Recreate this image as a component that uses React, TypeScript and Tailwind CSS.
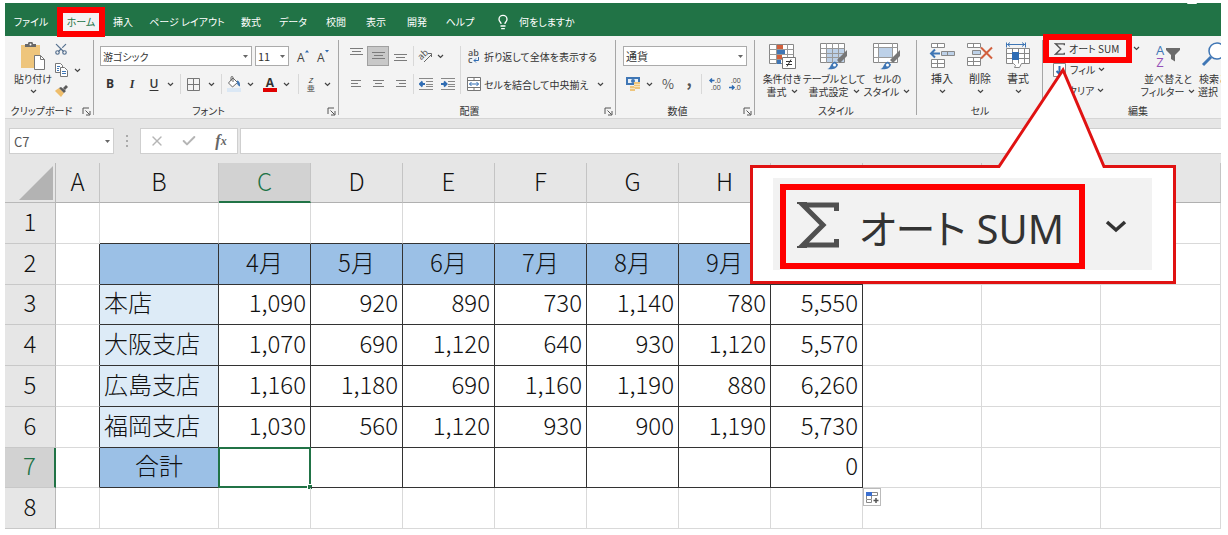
import type { ReactNode } from "react";
import { Lightbulb, X, Check, Scissors } from "lucide-react";

const COLUMNS = ["A", "B", "C", "D", "E", "F", "G", "H", "I", "J", "K", "L"];

const SHEET: Record<number, string[]> = {
  2: ["", "", "4月", "5月", "6月", "7月", "8月", "9月", "合計"],
  3: ["", "本店", "1,090", "920", "890", "730", "1,140", "780", "5,550"],
  4: ["", "大阪支店", "1,070", "690", "1,120", "640", "930", "1,120", "5,570"],
  5: ["", "広島支店", "1,160", "1,180", "690", "1,160", "1,190", "880", "6,260"],
  6: ["", "福岡支店", "1,030", "560", "1,120", "930", "900", "1,190", "5,730"],
  7: ["", "合計", "", "", "", "", "", "", "0"],
};

const TABS = [
  { name: "挿入", width: "w-9" },
  { name: "ページ レイアウト", width: "w-[92px]" },
  { name: "数式", width: "w-9" },
  { name: "データ", width: "w-12" },
  { name: "校閲", width: "w-[38px]" },
  { name: "表示", width: "w-[42px]" },
  { name: "開発", width: "w-10" },
  { name: "ヘルプ", width: "w-[46px]" },
];

function Chevron() {
  return (
    <svg width="7" height="5" viewBox="0 0 7 5" fill="none" stroke="#444" strokeWidth="1.2">
      <path d="M1 1l2.500 2.500L6 1" />
    </svg>
  );
}

function Caret() {
  return (
    <svg width="5" height="3" viewBox="0 0 5 3" className="pointer-events-none absolute right-1 top-1/2 -mt-px">
      <path d="M0 0h5L2.500 3z" fill="#666" />
    </svg>
  );
}

function SigmaIcon({ className }: { className: string }) {
  return (
    <svg viewBox="0 0 42 46" className={`shrink-0 ${className}`} fill="none" stroke="#505050">
      <path d="M39.500 9V3H6l20 20L6 43h33.500v-6" strokeWidth="5" />
      <path d="M0 1h10M0 45h10" strokeWidth="2" />
    </svg>
  );
}

function Tool({ label, className, children }: { label: string; className: string; children: ReactNode }) {
  return (
    <button aria-label={label} className={`flex h-5 shrink-0 items-center justify-center ${className}`}>
      {children}
    </button>
  );
}

function Drop({ className = "w-3" }: { className?: string }) {
  return (
    <Tool label="その他" className={className}>
      <Chevron />
    </Tool>
  );
}

function Divider({ className = "" }: { className?: string }) {
  return <span className={`h-5 w-px shrink-0 bg-[#d8d8d8] ${className}`} />;
}

function Group({
  name,
  className,
  launcher = false,
  children,
}: {
  name: string;
  className: string;
  launcher?: boolean;
  children: ReactNode;
}) {
  return (
    <section aria-label={name} className={`relative flex shrink-0 flex-col ${className}`}>
      <div className="h-[67px]">{children}</div>
      <div className={`relative flex h-4 items-center justify-center ${launcher ? "pr-4" : ""}`}>
        {name}
        {launcher && (
          <button aria-label={`${name}の設定`} className="absolute bottom-0.5 right-[3px]">
            <svg width="9" height="9" viewBox="0 0 9 9" fill="none" stroke="#555">
              <path d="M1 7V1h6M3.500 3.500l4 4M8 4v4H4" />
            </svg>
          </button>
        )}
      </div>
      <span className="absolute bottom-[3px] right-0 top-1 w-px bg-[#a6a6a6]" />
    </section>
  );
}

/* Tall button: icon on top, two lines below */
function BigTool({
  icon,
  line1,
  line2,
  className,
}: {
  icon: ReactNode;
  line1: string;
  line2?: string;
  className: string;
}) {
  return (
    <button
      className={`flex shrink-0 flex-col items-center whitespace-nowrap pt-1.5 leading-[13px] ${className}`}
    >
      <span className="flex h-[30px] items-start justify-center">{icon}</span>
      <span>{line1}</span>
      <span className="flex h-[13px] items-center gap-1">
        {line2}
        <Chevron />
      </span>
    </button>
  );
}

function PasteIcon() {
  return (
    <svg width="26" height="28" viewBox="0 0 26 28">
      <path d="M1 3h19v23H1z" fill="#eec57c" />
      <path d="M5 5V2h3a2.500 2.500 0 0 1 5 0h3v3z" fill="#686868" />
      <circle cx="10.500" cy="2.500" r="1" fill="#fff" />
      <path d="M14.500 13.500h6l4 4v10h-10z" fill="#fff" stroke="#777" />
      <path d="M20.500 13.500v4h4" fill="none" stroke="#777" />
    </svg>
  );
}

function CopyIcon() {
  return (
    <svg width="13" height="14" viewBox="0 0 13 14" fill="#fff" stroke="#777">
      <path d="M.5 .5h5l2 2v7h-7z" />
      <path d="M5.500 4.500h4l3 3v6h-7z" />
      <path d="M2 3.500h3M2 5.500h2M2 7.500h2M7 8.500h4M7 10.500h4" stroke="#3f76b5" />
    </svg>
  );
}

function PainterIcon() {
  return (
    <svg width="13" height="12" viewBox="0 0 13 12">
      <path d="M1 5l3-2 5 5-3 4-6-6z" fill="#eebd6b" />
      <path d="M4 3l2-1 5 4-2 2zM8 3l3-3 2 2-3 3z" fill="#5b5b5b" />
    </svg>
  );
}

function BordersIcon() {
  return (
    <svg width="13" height="13" viewBox="0 0 13 13" fill="none" stroke="#777">
      <path d="M.5 .5h12v12H.5zM6.500 .5v12M.5 6.500h12" />
    </svg>
  );
}

function BucketIcon() {
  return (
    <svg width="14" height="16" viewBox="0 0 14 16" fill="none" stroke="#666">
      <path d="M5 3L1.500 7l4 4 5-4.500L6 2z" fill="#fff" />
      <path d="M4 5V1.500a1 1 0 0 1 2 0V6" />
      <path d="M10 5c2 0 2.500 2 2.500 5-1.500-1-2-2-2-4z" fill="#3f76b5" stroke="#3f76b5" />
      <path d="M0 12h14v4H0z" fill="#dbe8f5" stroke="none" />
    </svg>
  );
}

function FontSizeIcon({ grow }: { grow?: boolean }) {
  return (
    <svg width="14" height="16" viewBox="0 0 14 16" fontFamily="Open Sans" fontSize="12" fill="#444">
      <text x="1" y="14">A</text>
      <path d={grow ? "M9 4.500L11 2l2 2.500z" : "M9 2l2 2.500L13 2z"} fill="#2f6cb3" />
    </svg>
  );
}

/* Text lines; widths in pixels, one for each line */
function Lines({ widths, align }: { widths: number[]; align: "left" | "center" | "right" }) {
  return (
    <svg width="13" height={widths.length * 3 - 1} stroke="#7b7b7b">
      {widths.map((w, i) => {
        const x = align === "left" ? 1 : align === "right" ? 12 - w : Math.floor((13 - w) / 2);
        return <path key={i} d={`M${x} ${i * 3 + 0.5}h${w}`} />;
      })}
    </svg>
  );
}

function IndentIcon({ increase }: { increase?: boolean }) {
  return (
    <svg width="14" height="12" viewBox="0 0 14 12" fill="none" stroke="#888">
      <path d="M0 .5h14M7 3.500h7M7 6.500h7M7 8.500h7M0 11.500h14" />
      <path
        d={increase ? "M0 6h5M3 3.500L5.500 6 3 8.500" : "M1 6h5M3.500 3.500L1 6l2.500 2.500"}
        stroke="#2f6cb3"
        strokeWidth="2"
      />
    </svg>
  );
}

function OrientationIcon() {
  return (
    <svg width="16" height="14" viewBox="0 0 16 14">
      <text x="1" y="10" fontSize="9" fill="#555" transform="rotate(-42 4 8)">
        ab
      </text>
      <path d="M6 13l7-7M10 4.500h3.500V8" fill="none" stroke="#666" />
    </svg>
  );
}

function WrapIcon() {
  return (
    <svg width="13" height="16" viewBox="0 0 13 16" fontFamily="Open Sans" fontWeight="600" fontSize="9" fill="#555">
      <text x="1" y="8">ab</text>
      <text x="1" y="15">c</text>
      <path d="M11.500 9v3.500H7M9 10.500l-2 2 2 2" fill="none" stroke="#2f6cb3" />
    </svg>
  );
}

function MergeIcon() {
  return (
    <svg width="14" height="14" viewBox="0 0 14 14" fill="#fff" stroke="#777">
      <path d="M.5 .5h13v13H.5zM.5 3.500h13M.5 10.500h13M7 .5v3M7 10.500v3" />
      <path d="M2.500 7h9M4.500 5L2.500 7l2 2M9.500 5l2 2-2 2" fill="none" stroke="#2f6cb3" />
    </svg>
  );
}

function CurrencyIcon() {
  return (
    <svg width="14" height="14" viewBox="0 0 14 14">
      <path d="M0 0h14v8H0z" fill="#3f76b5" />
      <path d="M2 2h10v4H2z" fill="#e8f0f8" />
      <circle cx="7" cy="4" r="2" fill="#3f76b5" />
      <path d="M8 5h6v7H8zM4 9h5v5H4z" fill="#eec57c" />
      <path d="M8 7.500h6M8 9.500h6M4 11.500h5" stroke="#f6e3bd" />
    </svg>
  );
}

function DecimalIcon({ increase }: { increase?: boolean }) {
  return (
    <svg width="14" height="16" viewBox="0 0 14 16" fontFamily="Open Sans" fontSize="7" fill="#444">
      <text x={increase ? 6 : 2} y="7">{increase ? ".0" : ".00"}</text>
      <text x={increase ? 2 : 6} y="14">{increase ? ".00" : ".0"}</text>
      <path
        d={increase ? "M5.500 4.500H1M3 2.500l-2 2 2 2" : "M0 11.500h5M3 9.500l2 2-2 2"}
        fill="none"
        stroke="#2f6cb3"
        strokeWidth="1.500"
      />
    </svg>
  );
}

function ConditionalIcon() {
  return (
    <svg width="27" height="28" viewBox="0 0 27 28">
      <path d="M.5 2.500h24v19H.5z" fill="#fff" stroke="#888" />
      <path d="M8 3h6v5H8zM8 13h5v5H8z" fill="#d2603d" />
      <path d="M8 8h8v5H8zM8 18h4v4H8z" fill="#3f76b5" />
      <path d="M.5 7.500h24M.5 12.500h24M.5 17.500h24M7.500 2v20M18.500 2v20" stroke="#999" fill="none" />
      <path d="M13.500 15.500h13v11h-13z" fill="#fff" stroke="#777" />
      <path d="M17 19.500h6M17 22.500h6M22 17.500l-4 7" fill="none" stroke="#333" />
    </svg>
  );
}

function TableStyleIcon({ cell }: { cell?: boolean }) {
  return (
    <svg width="28" height="28" viewBox="0 0 28 28">
      <path d="M.5 1.500h24v19H.5z" fill="#fff" stroke="#888" />
      {cell ? <path d="M6 6h13v9H6z" fill="#bdd1e8" /> : <path d="M7 6h17v14H7z" fill="#bdd1e8" />}
      {cell ? (
        <path d="M.5 5.500h24M.5 15.500h24M5.500 1v20M19.500 1v20" stroke="#999" fill="none" />
      ) : (
        <path d="M.5 6.500h24M.5 11.500h24M.5 15.500h24M6.500 1v20M12.500 1v20M18.500 1v20" stroke="#999" fill="none" />
      )}
      <path d="M27 8v6l-7 7-3-3z" fill="#777" />
      <path d="M7 27c4 0 3-6 8-7.500l3 3C17 27 12 28 7 27z" fill="#3f76b5" />
      <circle cx="14.500" cy="23" r="1.500" fill="#fff" />
    </svg>
  );
}

function InsertCellsIcon() {
  return (
    <svg width="26" height="27" viewBox="0 0 26 27" fill="#fff" stroke="#888">
      <path d="M2.500 1.500h13v4h-13zM8.500 1.500v4M2.500 17.500h13v8h-13zM8.500 17.500v8M2.500 21.500h13" />
      <path d="M12.500 9.500h13v4h-13zM18.500 9.500v4" fill="#bdd1e8" />
      <path d="M11 11.500H2M6 7.500l-4 4 4 4" fill="none" stroke="#3f76b5" strokeWidth="2" />
    </svg>
  );
}

function DeleteCellsIcon() {
  return (
    <svg width="26" height="27" viewBox="0 0 26 27" fill="#fff" stroke="#888">
      <path d="M.5 1.500h13v4H.5zM6.500 1.500v4M.5 15.500h13v8H.5zM6.500 15.500v8M.5 19.500h13" />
      <path d="M5.500 8.500h8v4h-8z" fill="#bdd1e8" />
      <path d="M14 5.500l11 11M25 5.500l-11 11" fill="none" stroke="#d2603d" strokeWidth="2" />
    </svg>
  );
}

function FormatCellsIcon() {
  return (
    <svg width="26" height="27" viewBox="0 0 26 27" fill="#fff" stroke="#888">
      <path d="M1.500 .5v5M20.500 .5v5M2 2.500h18M5 .5l-2.500 2L5 4.500M17 .5l2.500 2-2.500 2" fill="none" stroke="#3f76b5" />
      <path d="M1.500 6.500h23v15h-8l-2 4h-5l1-2-2-2h-7zM7.500 6.500v15M13.500 6.500v15M19.500 6.500v15M1.500 11.500h23M1.500 16.500h23" />
      <path d="M7 10h7v8H7z" fill="#2f6cb3" stroke="none" />
    </svg>
  );
}

function SortFilterIcon() {
  return (
    <span className="flex items-center gap-0.5 font-['Open_Sans',sans-serif] text-[13px] leading-[12px]">
      <span className="flex flex-col pt-0.5">
        <span className="text-[#3f76b5]">A</span>
        <span className="text-[#9450b8]">Z</span>
      </span>
      <svg width="14" height="14" viewBox="0 0 14 14">
        <path d="M0 0h14v2L9 7v6.500L5 11V7L0 2z" fill="#6b6b6b" />
      </svg>
    </span>
  );
}

function FindIcon() {
  return (
    <svg width="26" height="26" viewBox="0 0 26 26" fill="none" stroke="#3f76b5">
      <circle cx="16" cy="9" r="8" fill="#fff" strokeWidth="1.500" />
      <path d="M10 15L2 23" strokeWidth="3" />
    </svg>
  );
}

function Ribbon() {
  return (
    <div className="flex h-[83px] overflow-hidden border-b border-[#d5d5d5] bg-[#f3f3f3] text-[10px] text-[#333]">
      <Group name="クリップボード" className="w-[89px]" launcher>
        <div className="flex">
          <BigTool className="w-14" icon={<PasteIcon />} line1="貼り付け" />
          <div className="flex flex-col pt-[3px]">
            <div className="flex h-[21px]">
              <Tool label="切り取り" className="-ml-2.5 w-5">
                <Scissors size={14} strokeWidth={2} className="-rotate-90 text-[#55708f]" />
              </Tool>
            </div>
            <div className="flex h-[21px]">
              <Tool label="コピー" className="-ml-2.5 w-5">
                <CopyIcon />
              </Tool>
              <Drop />
            </div>
            <div className="flex h-[21px]">
              <Tool label="書式のコピー" className="-ml-2.5 w-5">
                <PainterIcon />
              </Tool>
            </div>
          </div>
        </div>
      </Group>

      <Group name="フォント" className="w-[245px]" launcher>
        <div className="flex flex-col gap-2 pl-1.5 pt-[10px]">
          <div className="flex">
            <span className="relative mr-[3px]">
              <select
                aria-label="フォント名"
                className="h-5 w-[152px] appearance-none border border-[#ababab] bg-white pl-0.5 text-[10px]"
              >
                <option>游ゴシック</option>
              </select>
              <Caret />
            </span>
            <span className="relative">
              <select
                aria-label="フォント サイズ"
                className="h-5 w-[34px] appearance-none border border-[#ababab] bg-white pl-0.5 text-[11px]"
              >
                <option>11</option>
              </select>
              <Caret />
            </span>
            <Tool label="拡大" className="ml-1 w-5">
              <FontSizeIcon grow />
            </Tool>
            <Tool label="縮小" className="w-5">
              <FontSizeIcon />
            </Tool>
          </div>
          <div className="flex font-['Open_Sans',sans-serif] text-[12px]">
            <Tool label="太字" className="w-5 font-bold">B</Tool>
            <Tool label="斜体" className="w-6 font-['Liberation_Serif',serif] font-bold italic">I</Tool>
            <Tool label="下線" className="w-5 font-semibold underline underline-offset-2">U</Tool>
            <Drop />
            <Divider className="ml-1" />
            <Tool label="罫線" className="ml-1 w-4">
              <BordersIcon />
            </Tool>
            <Drop className="ml-1 w-3" />
            <Divider className="ml-1" />
            <Tool label="塗りつぶしの色" className="ml-1 w-4">
              <BucketIcon />
            </Tool>
            <Drop className="w-4" />
            <Tool label="フォントの色" className="ml-1 w-4">
              <span className="w-[14px] border-b-4 border-[#e00000] text-center font-bold leading-[11px]">A</span>
            </Tool>
            <Drop className="w-4" />
            <Divider className="ml-1" />
            <Tool label="ふりがな" className="ml-1 w-4">
              <span className="flex flex-col items-center text-[8px] leading-[8px]">
                <i>Z</i>
                <span>亜</span>
              </span>
            </Tool>
            <Drop className="w-4" />
          </div>
        </div>
      </Group>

      <Group name="配置" className="w-[277px]" launcher>
        <div className="flex pl-1.5 pt-[10px]">
          <div className="flex flex-col gap-2">
            <div className="flex">
              <Tool label="上揃え" className="w-[22px] pb-2">
                <Lines widths={[13, 9, 13]} align="center" />
              </Tool>
              <Tool label="上下中央揃え" className="w-[22px] border border-[#a0a0a0] bg-[#c8c8c8]">
                <Lines widths={[13, 9, 13]} align="center" />
              </Tool>
              <Tool label="下揃え" className="w-[22px] pt-1">
                <Lines widths={[13, 9, 13]} align="center" />
              </Tool>
              <Divider className="ml-0.5" />
              <Tool label="方向" className="w-6">
                <OrientationIcon />
              </Tool>
              <Drop className="-ml-1 w-3" />
            </div>
            <div className="flex">
              <Tool label="左揃え" className="w-[22px]">
                <Lines widths={[10, 7, 10]} align="left" />
              </Tool>
              <Tool label="中央揃え" className="w-[22px]">
                <Lines widths={[11, 7, 11]} align="center" />
              </Tool>
              <Tool label="右揃え" className="w-[22px]">
                <Lines widths={[10, 7, 10]} align="right" />
              </Tool>
              <Divider className="ml-0.5" />
              <Tool label="インデントを減らす" className="w-6">
                <IndentIcon />
              </Tool>
              <Tool label="インデントを増やす" className="w-5">
                <IndentIcon increase />
              </Tool>
            </div>
          </div>
          <div className="ml-0.5 flex flex-col gap-2 border-l border-[#d8d8d8] pl-1.5">
            <button className="flex h-5 items-center gap-1 whitespace-nowrap">
              <WrapIcon />
              折り返して全体を表示する
            </button>
            <div className="flex">
              <button className="flex h-5 items-center gap-[3px] whitespace-nowrap">
                <MergeIcon />
                セルを結合して中央揃え
              </button>
              <Drop className="ml-1 w-4" />
            </div>
          </div>
        </div>
      </Group>

      <Group name="数値" className="w-[139px]" launcher>
        <div className="flex flex-col gap-2 pl-[7px] pt-[10px]">
          <span className="relative w-[124px]">
            <select
              aria-label="表示形式"
              className="h-5 w-full appearance-none border border-[#ababab] bg-white pl-0.5 text-[11px]"
            >
              <option>通貨</option>
            </select>
            <Caret />
          </span>
          <div className="flex text-[#555]">
            <Tool label="通貨表示形式" className="w-5">
              <CurrencyIcon />
            </Tool>
            <Drop />
            <Tool label="パーセント" className="ml-1 w-[18px] text-[13px]">%</Tool>
            <Tool label="桁区切り" className="ml-1 w-4 pb-2.5 text-[16px] font-bold">,</Tool>
            <Divider className="ml-1" />
            <Tool label="小数点以下を増やす" className="ml-1 w-5">
              <DecimalIcon increase />
            </Tool>
            <Tool label="小数点以下を減らす" className="w-5">
              <DecimalIcon />
            </Tool>
          </div>
        </div>
      </Group>

      <Group name="スタイル" className="w-[162px]">
        <div className="flex">
          <BigTool className="w-[54px]" icon={<ConditionalIcon />} line1="条件付き" line2="書式" />
          <BigTool className="w-[50px]" icon={<TableStyleIcon />} line1="テーブルとして" line2="書式設定" />
          <BigTool className="w-[56px]" icon={<TableStyleIcon cell />} line1="セルの" line2="スタイル" />
        </div>
      </Group>

      <Group name="セル" className="w-[126px]">
        <div className="flex justify-center text-[11px]">
          <BigTool className="w-[38px]" icon={<InsertCellsIcon />} line1="挿入" />
          <BigTool className="w-[38px]" icon={<DeleteCellsIcon />} line1="削除" />
          <BigTool className="w-[38px]" icon={<FormatCellsIcon />} line1="書式" />
        </div>
      </Group>

      <Group name="編集" className="w-[190px]">
        <div className="flex">
          <div className="flex w-[99px] flex-col pt-0.5">
            <div className="flex h-[21px] items-center pl-[11px]">
              <button className="flex items-center gap-1 whitespace-nowrap">
                <SigmaIcon className="h-3 w-[11px]" />
                オート SUM
              </button>
              <Drop className="ml-auto w-3" />
            </div>
            <div className="flex h-[21px] items-center gap-[3px] pl-[10px]">
              <button className="flex items-center gap-[3px]">
                <svg width="14" height="14" viewBox="0 0 14 14" fill="#fff" stroke="#888">
                  <path d="M.5 .5h12v13H.5z" />
                  <path d="M6.500 3v8M3.500 8l3 3 3-3" fill="none" stroke="#2f6cb3" strokeWidth="2" />
                </svg>
                フィル
              </button>
              <Chevron />
            </div>
            <div className="flex h-[21px] items-center gap-[3px] pl-[25px]">
              <button>クリア</button>
              <Chevron />
            </div>
          </div>
          <BigTool className="w-[52px]" icon={<SortFilterIcon />} line1="並べ替えと" line2="フィルター" />
          <BigTool className="w-[39px]" icon={<FindIcon />} line1="検索と" line2="選択" />
        </div>
      </Group>
    </div>
  );
}

function FormulaBar() {
  return (
    <div className="flex h-11 items-center bg-[#e6e6e6] pl-1 text-[#555]">
      <label className="relative">
        <input
          aria-label="名前ボックス"
          defaultValue="C7"
          className="h-[26px] w-[105px] border border-[#cfcfcf] bg-white pl-1 text-[13px]"
        />
        <Caret />
      </label>
      <span className="flex w-[26px] flex-col items-center gap-[3px]">
        <i className="size-0.5 bg-[#aaa]" />
        <i className="size-0.5 bg-[#aaa]" />
        <i className="size-0.5 bg-[#aaa]" />
      </span>
      <div className="mr-0.5 flex h-[26px] w-[98px] items-center border border-[#cfcfcf] bg-white text-[#b5b5b5]">
        <Tool label="キャンセル" className="w-8">
          <X size={16} strokeWidth={2} />
        </Tool>
        <Tool label="入力" className="w-8">
          <Check size={16} strokeWidth={3} />
        </Tool>
        <Tool
          label="関数の挿入"
          className="w-8 font-['Liberation_Serif',serif] text-[16px] font-bold italic text-[#666]"
        >
          f<span className="text-[12px]">x</span>
        </Tool>
      </div>
      <input
        aria-label="数式バー"
        className="h-[26px] min-w-0 flex-1 border border-r-0 border-[#cfcfcf] bg-white px-2 text-[13px]"
      />
    </div>
  );
}

function cellClass(row: number, col: number) {
  const inTable = row >= 2 && row <= 7 && col >= 1 && col <= 8;
  const classes = ["relative border-r border-b p-0 px-1 pb-1"];

  // a cell draws its right and bottom edge only
  const darkRight = row >= 2 && row <= 7 && col <= 8;
  const darkBottom = row <= 7 && col >= 1 && col <= 8 && (row > 1 || col > 0);
  classes.push(darkRight ? "border-r-[#333]" : "border-r-[#d9d9d9]");
  classes.push(darkBottom ? "border-b-[#333]" : "border-b-[#d9d9d9]");

  if (inTable && (row === 2 || (row === 7 && col === 1))) {
    classes.push("bg-[#9bc0e6] text-center");
  } else if (inTable && col === 1) {
    classes.push("bg-[#ddebf7] text-left");
  } else {
    classes.push("text-right");
  }
  return classes.join(" ");
}

function Sheet() {
  return (
    <table className="h-[366px] w-full table-fixed border-separate border-spacing-0 bg-white text-[24px] font-light leading-[30px] text-[#111] [font-feature-settings:normal]">
      <colgroup>
        <col className="w-[51px]" />
        <col className="w-[44px]" />
        <col className="w-[119px]" />
        <col className="w-[92px]" />
        <col className="w-[92px]" />
        <col className="w-[92px]" />
        <col className="w-[92px]" />
        <col className="w-[92px]" />
        <col className="w-[92px]" />
        <col className="w-[92px]" />
        <col className="w-[119px]" />
        <col className="w-[119px]" />
        <col />
      </colgroup>
      <thead>
        <tr className="h-10 bg-[#e6e6e6]">
          <th className="border-b border-r border-[#b8b8b8] p-0 pb-0.5 pr-0.5 align-bottom">
            <svg width="34" height="34" className="ml-auto">
              <path d="M34 0v34H0z" fill="#b3b3b3" />
            </svg>
          </th>
          {COLUMNS.map((name) => (
            <th
              key={name}
              className={`border-r border-[#c4c4c4] p-0 font-light ${
                name === "C"
                  ? "border-b-2 border-b-[#217346] bg-[#d2d2d2] pb-[3px] text-[#217346]"
                  : "border-b border-b-[#b0b0b0] pb-1"
              }`}
            >
              {name}
            </th>
          ))}
        </tr>
      </thead>
      <tbody>
        {[1, 2, 3, 4, 5, 6, 7, 8].map((row) => (
          <tr key={row}>
            <th
              className={`border-b border-b-[#c8c8c8] p-0 pb-1 font-light ${
                row === 7
                  ? "border-r-2 border-r-[#217346] bg-[#d2d2d2] text-[#217346]"
                  : "border-r border-r-[#b8b8b8] bg-[#e6e6e6]"
              }`}
            >
              {row}
            </th>
            {COLUMNS.map((name, col) => (
              <td key={name} className={cellClass(row, col)}>
                {SHEET[row]?.[col]}
                {row === 7 && name === "C" && (
                  <span className="absolute -inset-px border-2 border-[#217346]">
                    <span className="absolute -bottom-[3px] -right-[3px] size-[5px] border-l border-t border-white bg-[#217346]" />
                  </span>
                )}
                {row === 8 && name === "J" && (
                  <button
                    aria-label="オートフィル オプション"
                    className="absolute left-0 top-0 flex size-[18px] items-center justify-center border border-[#bbb] bg-white"
                  >
                    <svg width="13" height="13" viewBox="0 0 13 13" fill="none" stroke="#888">
                      <path d="M.5 1.500h11v3H.5zM.5 4.500h5v4h-5zM.5 9v2.500h5V9" />
                      <path d="M0 1h6v4H0z" fill="#3b6fd0" stroke="none" />
                      <path d="M7.500 9.500h5M10 7v5" stroke="#555" strokeWidth="1.500" />
                    </svg>
                  </button>
                )}
              </td>
            ))}
          </tr>
        ))}
      </tbody>
    </table>
  );
}

/* Enlarged view of the AutoSum button, with its tail pointing at the ribbon */
function Callout() {
  return (
    <aside className="absolute left-[750px] top-[165px] h-[119px] w-[426px] border-3 border-[#e01212] bg-white pl-5 pt-2.5">
      <svg width="114" height="104" viewBox="0 0 114 104" className="absolute -top-[101px] left-[243px]">
        <path d="M2 104V99.500L67 3l41 96.500V104z" fill="#fff" />
        <path d="M0 99.500h3L67 3l41 96.500h4" fill="none" stroke="#e01212" strokeWidth="3" />
      </svg>
      <div className="flex h-[92px] w-[379px] items-center bg-[#f2f2f2] pl-[7px] pt-[5px] text-[#333]">
        <div className="flex h-[85px] w-[305px] items-center border-6 border-[#ff0000] pl-[11px] font-['Noto_Sans','Noto_Sans_CJK_JP',sans-serif] text-[40px]">
          <SigmaIcon className="mb-1 mr-5 h-[46px] w-[42px]" />
          <span className="whitespace-nowrap pt-1">オート SUM</span>
        </div>
        <svg width="22" height="14" viewBox="0 0 22 14" className="ml-5" fill="none" stroke="#333" strokeWidth="3.500">
          <path d="M2 2l9 8 9-8" />
        </svg>
      </div>
    </aside>
  );
}

export default function App() {
  return (
    <main className="relative overflow-hidden bg-white pb-1.5 pl-[5px] pr-[7px] pt-[3px] font-['Noto_Sans_CJK_JP',sans-serif] [font-feature-settings:'palt']">
      <nav className="relative flex h-[33px] items-center bg-[#217346] pt-1 text-[10px] text-white">
        <button className="w-[52px]">ファイル</button>
        <button className="relative z-10 h-[30px] w-12 whitespace-nowrap border-6 border-[#ff0000] bg-[#f3f3f3] leading-[18px] text-[#217346]">
          ホーム
        </button>
        {TABS.map((tab) => (
          <button key={tab.name} className={`whitespace-nowrap ${tab.width}`}>
            {tab.name}
          </button>
        ))}
        <button className="ml-3 flex items-center gap-2 whitespace-nowrap">
          <Lightbulb size={16} strokeWidth={2} />
          何をしますか
        </button>
        <span className="absolute right-6 top-0 h-px w-2.5 rounded-b-full bg-white" />
      </nav>
      <Ribbon />
      <FormulaBar />
      <Sheet />
      <div className="pointer-events-none absolute left-[1043px] top-[34px] h-[29px] w-[89px] border-6 border-[#ff0000]" />
      <Callout />
    </main>
  );
}
